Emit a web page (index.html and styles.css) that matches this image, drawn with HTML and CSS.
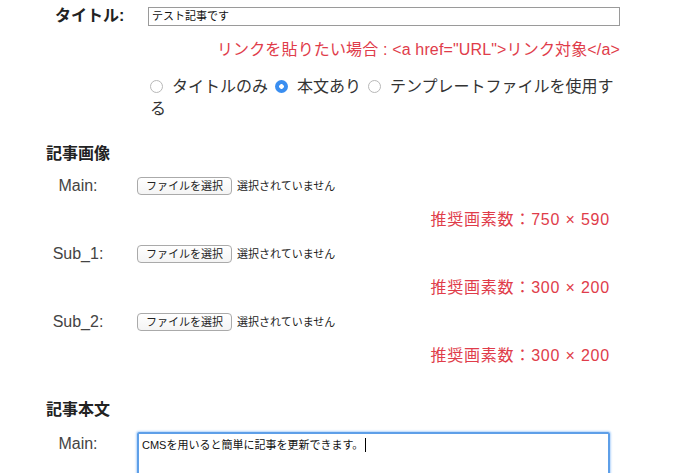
FILE: index.html
```html
<!DOCTYPE html>
<html lang="ja">
<head>
<meta charset="utf-8">
<link rel="stylesheet" href="styles.css">
</head>
<body>
<div class="page">
  <div class="title-row">
    <label class="title-label">タイトル:</label>
    <div class="title-input">テスト記事です</div>
  </div>
  <p class="hint">リンクを貼りたい場合 : &lt;a href="URL"&gt;リンク対象&lt;/a&gt;</p>
  <p class="radios"><span class="radio"></span>タイトルのみ<span class="radio checked"></span>本文あり<span class="radio"></span>テンプレートファイルを使用する</p>

  <h2 class="section">記事画像</h2>
  <div class="file-row">
    <span class="field-label">Main:</span>
    <span class="file-btn">ファイルを選択</span>
    <span class="file-status">選択されていません</span>
  </div>
  <p class="size-note">推奨画素数：750 × 590</p>
  <div class="file-row">
    <span class="field-label">Sub_1:</span>
    <span class="file-btn">ファイルを選択</span>
    <span class="file-status">選択されていません</span>
  </div>
  <p class="size-note">推奨画素数：300 × 200</p>
  <div class="file-row">
    <span class="field-label">Sub_2:</span>
    <span class="file-btn">ファイルを選択</span>
    <span class="file-status">選択されていません</span>
  </div>
  <p class="size-note">推奨画素数：300 × 200</p>

  <h2 class="section body-section">記事本文</h2>
  <div class="text-row">
    <span class="field-label">Main:</span>
    <div class="textarea">CMSを用いると簡単に記事を更新できます。<span class="caret"></span></div>
  </div>
</div>
</body>
</html>
```

FILE: styles.css
```css
html, body {
  margin: 0;
  padding: 0;
  background: #fff;
}
body {
  font-family: "Liberation Sans", "Noto Sans CJK JP", sans-serif;
  color: #333;
  font-size: 16px;
  line-height: 22px;
  overflow: hidden;
  height: 473px;
}
.page {
  width: 620px;
}
p, h2 {
  margin: 0;
}
.title-row {
  display: flex;
  align-items: center;
  height: 32px;
  padding-left: 55px;
}
.title-label {
  width: 93px;
  font-weight: bold;
  color: #222;
}
.title-input {
  box-sizing: border-box;
  width: 472px;
  height: 19px;
  border: 1px solid #9a9a9a;
  font-size: 11px;
  line-height: 17px;
  padding-left: 3px;
  color: #111;
}
.hint {
  margin-top: 7px;
  text-align: right;
  color: #e03c4a;
  letter-spacing: 0.15px;
}
.radios {
  margin-top: 15px;
  margin-left: 150px;
  color: #333;
}
.radio {
  display: inline-block;
  box-sizing: border-box;
  width: 13px;
  height: 13px;
  border: 1px solid #b8b8b8;
  border-radius: 50%;
  margin: 0 9px 0 7px;
  vertical-align: -1px;
  background: #fff;
}
.radio:first-child {
  margin-left: 0;
}
.radio.checked {
  border: 0;
  background: radial-gradient(circle, #fff 0 2px, #3a8ef0 2.6px);
}
.section {
  margin-top: 23px;
  padding-left: 46px;
  font-size: 16px;
  line-height: 22px;
  font-weight: bold;
  color: #222;
}
.file-row {
  display: flex;
  align-items: center;
  margin-top: 10px;
  padding-left: 46px;
  height: 22px;
}
.size-note + .file-row {
  margin-top: 12px;
}
.field-label {
  width: 64px;
  text-align: center;
  color: #444;
  margin-right: 27px;
}
.file-btn {
  box-sizing: border-box;
  height: 18px;
  padding: 0 8px;
  border: 1px solid #aaa;
  border-radius: 4px;
  font-size: 11px;
  line-height: 16px;
  color: #222;
  background: linear-gradient(#fff, #f4f4f4);
}
.file-status {
  margin-left: 5px;
  font-size: 11px;
  color: #222;
}
.size-note {
  margin-top: 12px;
  width: 610px;
  text-align: right;
  color: #e03c4a;
  letter-spacing: 0.8px;
}
.body-section {
  margin-top: 32px;
}
.text-row {
  display: flex;
  align-items: flex-start;
  margin-top: 11px;
  padding-left: 46px;
}
.text-row .field-label {
  padding-top: 1px;
}
.textarea {
  box-sizing: border-box;
  width: 473px;
  height: 90px;
  border: 2px solid #5e9fe8;
  box-shadow: 0 0 2px 1px #b5d6fb;
  border-radius: 2px;
  font-size: 11px;
  line-height: 16px;
  padding: 3px 3px;
  color: #111;
}
.caret {
  display: inline-block;
  width: 1px;
  height: 14px;
  background: #000;
  margin-left: 2px;
  vertical-align: -3px;
}
```
